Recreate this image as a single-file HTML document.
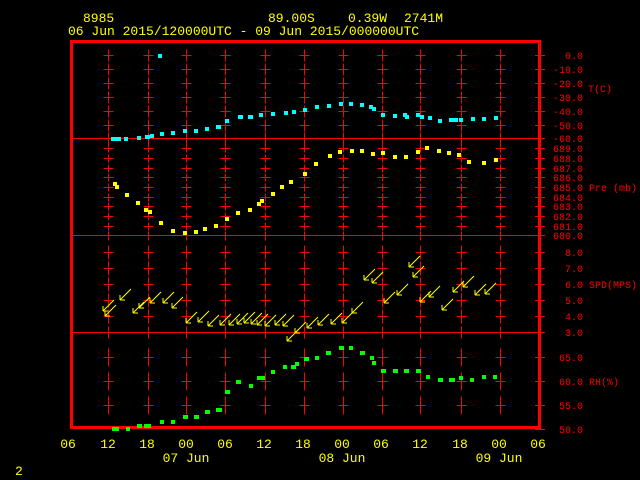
<!DOCTYPE html>
<html><head><meta charset="utf-8"><style>
html,body{margin:0;padding:0;background:#000;width:640px;height:480px;overflow:hidden}
svg{display:block}
text{font-family:"Liberation Mono",monospace}
.h{fill:#ffff00;font-size:13px}
.r{fill:#ff0000;font-size:10px;text-anchor:end}
.u{fill:#ff0000;font-size:10px}
.b{fill:#ffff00;font-size:13px;text-anchor:middle}
</style></head><body>
<svg width="640" height="480" viewBox="0 0 640 480" xmlns="http://www.w3.org/2000/svg">
<defs>
<g id="tk" stroke="#f00" stroke-width="1" shape-rendering="crispEdges">
<path transform="translate(0.5 0.5)" d="M-5 55h10M0 49v12M-5 69h10M0 63v12M-5 83h10M0 77v12M-5 97h10M0 91v12M-5 111h10M0 105v12M-5 125h10M0 119v12M0 132v12
M-5 148h10M0 144v8M-5 158h10M0 154v8M-5 168h10M0 164v8M-5 177h10M0 173v8M-5 187h10M0 183v8M-5 197h10M0 193v8M-5 206h10M0 202v8M-5 216h10M0 212v8M-5 226h10M0 222v8M0 231v9
M-5 252h10M0 245v14M-5 268h10M0 261v14M-5 284h10M0 277v14M-5 300h10M0 293v14M-5 316h10M0 309v14M0 326v12
M-5 357h10M0 348v18M-5 381h10M0 372v18M-5 405h10M0 396v18"/>
</g>
<g id="ar" stroke="#ff0" stroke-width="1" fill="none"><path d="M6 -6L-5 5M-5 5v-5M-5 5h5"/></g>
</defs>
<text class="h" x="83" y="22">8985</text>
<text class="h" x="268" y="22">89.00S</text>
<text class="h" x="348" y="22">0.39W</text>
<text class="h" x="404" y="22">2741M</text>
<text class="h" x="68" y="35">06 Jun 2015/120000UTC - 09 Jun 2015/000000UTC</text>
<use href="#tk" x="108"/><use href="#tk" x="148"/><use href="#tk" x="186"/><use href="#tk" x="225"/><use href="#tk" x="265"/><use href="#tk" x="304"/><use href="#tk" x="343"/><use href="#tk" x="382"/><use href="#tk" x="420"/><use href="#tk" x="461"/><use href="#tk" x="500"/>
<rect x="71.5" y="41.5" width="468" height="386" fill="none" stroke="#f00" stroke-width="3"/>
<g fill="#f00"><rect x="72" y="138" width="473" height="1"/><rect x="72" y="235" width="473" height="1"/><rect x="72" y="332" width="473" height="1"/></g>
<path stroke="#f00" stroke-width="1" shape-rendering="crispEdges" transform="translate(0 0.5)" d="M535 55h10M535 69h10M535 83h10M535 97h10M535 111h10M535 125h10M535 148h10M535 158h10M535 168h10M535 177h10M535 187h10M535 197h10M535 206h10M535 216h10M535 226h10M535 252h10M535 268h10M535 284h10M535 300h10M535 316h10M535 357h10M535 381h10M535 405h10M535 429h10"/>
<g>
<text class="r" x="583" y="59">0.0</text><text class="r" x="583" y="73">-10.0</text><text class="r" x="583" y="87">-20.0</text><text class="r" x="583" y="101">-30.0</text><text class="r" x="583" y="115">-40.0</text><text class="r" x="583" y="129">-50.0</text><text class="r" x="583" y="142">-60.0</text>
<text class="r" x="583" y="152">689.0</text><text class="r" x="583" y="162">688.0</text><text class="r" x="583" y="172">687.0</text><text class="r" x="583" y="181">686.0</text><text class="r" x="583" y="191">685.0</text><text class="r" x="583" y="201">684.0</text><text class="r" x="583" y="210">683.0</text><text class="r" x="583" y="220">682.0</text><text class="r" x="583" y="230">681.0</text><text class="r" x="583" y="239">680.0</text>
<text class="r" x="583" y="256">8.0</text><text class="r" x="583" y="272">7.0</text><text class="r" x="583" y="288">6.0</text><text class="r" x="583" y="304">5.0</text><text class="r" x="583" y="320">4.0</text><text class="r" x="583" y="336">3.0</text>
<text class="r" x="583" y="361">65.0</text><text class="r" x="583" y="385">60.0</text><text class="r" x="583" y="409">55.0</text><text class="r" x="583" y="433">50.0</text>
<text class="u" x="588" y="92">T(C)</text><text class="u" x="589" y="191">Pre (mb)</text><text class="u" x="589" y="288">SPD(MPS)</text><text class="u" x="589" y="385">RH(%)</text>
</g>
<g fill="#00ffff">
<rect x="158" y="54" width="4" height="4"/>
<rect x="111" y="137" width="5" height="4"/><rect x="116" y="137" width="5" height="4"/><rect x="124" y="137" width="4" height="4"/><rect x="137" y="136" width="4" height="4"/><rect x="145" y="135" width="5" height="4"/><rect x="150" y="134" width="4" height="4"/><rect x="160" y="132" width="4" height="4"/><rect x="171" y="131" width="4" height="4"/><rect x="183" y="129" width="4" height="4"/><rect x="194" y="129" width="4" height="4"/><rect x="205" y="127" width="4" height="4"/><rect x="216" y="125" width="5" height="4"/><rect x="225" y="119" width="4" height="4"/><rect x="238" y="115" width="5" height="4"/><rect x="248" y="115" width="5" height="4"/><rect x="259" y="113" width="4" height="4"/><rect x="271" y="112" width="4" height="4"/><rect x="284" y="111" width="4" height="4"/><rect x="292" y="110" width="4" height="4"/><rect x="303" y="108" width="4" height="4"/><rect x="315" y="105" width="4" height="4"/><rect x="327" y="104" width="4" height="4"/><rect x="339" y="102" width="4" height="4"/><rect x="349" y="102" width="4" height="4"/><rect x="360" y="103" width="4" height="4"/><rect x="369" y="105" width="4" height="4"/><rect x="372" y="107" width="4" height="4"/><rect x="381" y="113" width="4" height="4"/><rect x="393" y="114" width="4" height="4"/><rect x="403" y="113" width="4" height="4"/><rect x="405" y="115" width="4" height="4"/><rect x="416" y="113" width="4" height="4"/><rect x="420" y="115" width="4" height="4"/><rect x="428" y="116" width="4" height="4"/><rect x="438" y="119" width="4" height="4"/><rect x="449" y="118" width="5" height="4"/><rect x="454" y="118" width="4" height="4"/><rect x="459" y="118" width="4" height="4"/><rect x="471" y="117" width="4" height="4"/><rect x="482" y="117" width="4" height="4"/><rect x="494" y="116" width="4" height="4"/>
</g>
<g fill="#ffff00">
<rect x="113" y="182" width="4" height="4"/><rect x="115" y="185" width="4" height="4"/><rect x="125" y="193" width="4" height="4"/><rect x="136" y="201" width="4" height="4"/><rect x="144" y="208" width="4" height="4"/><rect x="148" y="210" width="4" height="4"/><rect x="159" y="221" width="4" height="4"/><rect x="171" y="229" width="4" height="4"/><rect x="183" y="231" width="4" height="4"/><rect x="194" y="230" width="4" height="4"/><rect x="203" y="227" width="4" height="4"/><rect x="214" y="224" width="4" height="4"/><rect x="225" y="217" width="4" height="4"/><rect x="236" y="211" width="4" height="4"/><rect x="248" y="208" width="4" height="4"/><rect x="257" y="202" width="4" height="4"/><rect x="260" y="199" width="4" height="4"/><rect x="271" y="192" width="4" height="4"/><rect x="280" y="185" width="4" height="4"/><rect x="289" y="180" width="4" height="4"/><rect x="303" y="172" width="4" height="4"/><rect x="314" y="162" width="4" height="4"/><rect x="328" y="154" width="4" height="4"/><rect x="338" y="150" width="4" height="4"/><rect x="350" y="149" width="4" height="4"/><rect x="360" y="149" width="4" height="4"/><rect x="371" y="152" width="4" height="4"/><rect x="381" y="151" width="4" height="4"/><rect x="393" y="155" width="4" height="4"/><rect x="404" y="155" width="4" height="4"/><rect x="416" y="150" width="4" height="4"/><rect x="425" y="146" width="4" height="4"/><rect x="437" y="149" width="4" height="4"/><rect x="447" y="151" width="4" height="4"/><rect x="457" y="153" width="4" height="4"/><rect x="467" y="160" width="4" height="4"/><rect x="482" y="161" width="4" height="4"/><rect x="494" y="158" width="4" height="4"/>
</g>
<g>
<use href="#ar" x="108" y="306"/><use href="#ar" x="110" y="311"/><use href="#ar" x="125" y="295"/><use href="#ar" x="138" y="308"/><use href="#ar" x="144" y="303"/><use href="#ar" x="155" y="298"/><use href="#ar" x="168" y="298"/><use href="#ar" x="177" y="303"/><use href="#ar" x="191" y="318"/><use href="#ar" x="203" y="317"/><use href="#ar" x="213" y="321"/><use href="#ar" x="225" y="320"/><use href="#ar" x="234" y="320"/><use href="#ar" x="242" y="319"/><use href="#ar" x="249" y="318"/><use href="#ar" x="256" y="319"/><use href="#ar" x="262" y="320"/><use href="#ar" x="270" y="321"/><use href="#ar" x="280" y="320"/><use href="#ar" x="288" y="321"/><use href="#ar" x="292" y="336"/><use href="#ar" x="300" y="328"/><use href="#ar" x="312" y="323"/><use href="#ar" x="323" y="320"/><use href="#ar" x="336" y="319"/><use href="#ar" x="347" y="318"/><use href="#ar" x="357" y="308"/><use href="#ar" x="369" y="275"/><use href="#ar" x="377" y="278"/><use href="#ar" x="389" y="298"/><use href="#ar" x="402" y="290"/><use href="#ar" x="414" y="262"/><use href="#ar" x="418" y="272"/><use href="#ar" x="425" y="297"/><use href="#ar" x="434" y="292"/><use href="#ar" x="447" y="305"/><use href="#ar" x="458" y="287"/><use href="#ar" x="468" y="282"/><use href="#ar" x="480" y="290"/><use href="#ar" x="490" y="289"/>
</g>
<g fill="#00ff00">
<rect x="112" y="427" width="7" height="4"/><rect x="126" y="427" width="4" height="4"/><rect x="137" y="424" width="5" height="4"/><rect x="144" y="424" width="7" height="4"/><rect x="160" y="420" width="4" height="4"/><rect x="171" y="420" width="4" height="4"/><rect x="183" y="415" width="5" height="4"/><rect x="194" y="415" width="5" height="4"/><rect x="205" y="410" width="5" height="4"/><rect x="216" y="408" width="6" height="4"/><rect x="225" y="390" width="5" height="4"/><rect x="236" y="380" width="5" height="4"/><rect x="249" y="384" width="4" height="4"/><rect x="257" y="376" width="8" height="4"/><rect x="271" y="370" width="4" height="4"/><rect x="283" y="365" width="4" height="4"/><rect x="291" y="365" width="5" height="4"/><rect x="295" y="362" width="4" height="4"/><rect x="304" y="357" width="5" height="4"/><rect x="315" y="356" width="4" height="4"/><rect x="326" y="351" width="5" height="4"/><rect x="339" y="346" width="5" height="4"/><rect x="349" y="346" width="4" height="4"/><rect x="360" y="351" width="5" height="4"/><rect x="370" y="356" width="4" height="4"/><rect x="372" y="361" width="4" height="4"/><rect x="381" y="369" width="5" height="4"/><rect x="393" y="369" width="5" height="4"/><rect x="404" y="369" width="5" height="4"/><rect x="416" y="369" width="5" height="4"/><rect x="426" y="375" width="4" height="4"/><rect x="438" y="378" width="5" height="4"/><rect x="449" y="378" width="6" height="4"/><rect x="459" y="376" width="4" height="4"/><rect x="470" y="378" width="4" height="4"/><rect x="482" y="375" width="4" height="4"/><rect x="493" y="375" width="4" height="4"/>
</g>
<text class="b" x="68" y="448">06</text><text class="b" x="108" y="448">12</text><text class="b" x="147" y="448">18</text><text class="b" x="186" y="448">00</text><text class="b" x="225" y="448">06</text><text class="b" x="264" y="448">12</text><text class="b" x="303" y="448">18</text><text class="b" x="342" y="448">00</text><text class="b" x="381" y="448">06</text><text class="b" x="420" y="448">12</text><text class="b" x="460" y="448">18</text><text class="b" x="499" y="448">00</text><text class="b" x="538" y="448">06</text>
<text class="b" x="186" y="462">07 Jun</text><text class="b" x="342" y="462">08 Jun</text><text class="b" x="499" y="462">09 Jun</text>
<text class="h" x="15" y="475">2</text>
</svg>
</body></html>
